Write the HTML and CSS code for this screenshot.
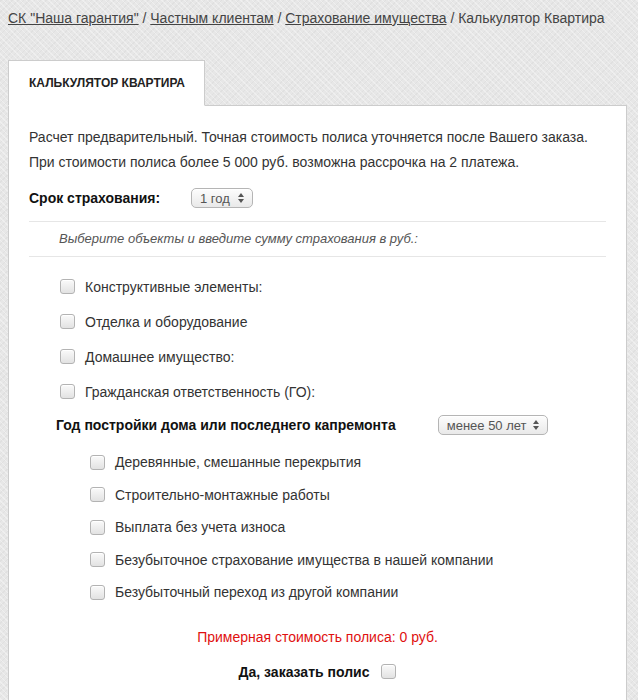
FILE: index.html
```html
<!DOCTYPE html>
<html lang="ru">
<head>
  <meta charset="UTF-8" />
  <meta name="viewport" content="width=device-width, initial-scale=1.0" />
  <title>Калькулятор Квартира</title>
  <link rel="stylesheet" href="styles.css">
</head>
<body>

  <div class="breadcrumbs">
    <a href="#">СК "Наша гарантия"</a> / <a href="#">Частным клиентам</a> / <a href="#">Страхование имущества</a> / Калькулятор Квартира
  </div>

  <div class="tabs">
    <div class="tab active">Калькулятор Квартира</div>
  </div>

  <section class="calc">
    <p class="intro">Расчет предварительный. Точная стоимость полиса уточняется после Вашего заказа.<br>
      При стоимости полиса более 5 000 руб. возможна рассрочка на 2 платежа.</p>

    <div class="term-row">
      <strong class="term-label">Срок страхования:</strong>
      <span class="select select-term">
        <span class="select-text">1 год</span>
        <svg class="select-arrows" width="6" height="10" viewBox="0 0 6 10"><path d="M3 0 L6 4 L0 4 Z M0 6 L6 6 L3 10 Z" fill="#555"/></svg>
      </span>
    </div>

    <div class="note">Выберите объекты и введите сумму страхования в руб.:</div>

    <ul class="objects">
      <li><span class="check"></span>Конструктивные элементы:</li>
      <li><span class="check"></span>Отделка и оборудование</li>
      <li><span class="check"></span>Домашнее имущество:</li>
      <li><span class="check"></span>Гражданская ответственность (ГО):</li>
    </ul>

    <div class="year-row">
      <strong>Год постройки дома или последнего капремонта</strong>
      <span class="select select-year">
        <span class="select-text">менее 50 лет</span>
        <svg class="select-arrows" width="6" height="10" viewBox="0 0 6 10"><path d="M3 0 L6 4 L0 4 Z M0 6 L6 6 L3 10 Z" fill="#555"/></svg>
      </span>
    </div>

    <ul class="options">
      <li><span class="check"></span>Деревянные, смешанные перекрытия</li>
      <li><span class="check"></span>Строительно-монтажные работы</li>
      <li><span class="check"></span>Выплата без учета износа</li>
      <li><span class="check"></span>Безубыточное страхование имущества в нашей компании</li>
      <li><span class="check"></span>Безубыточный переход из другой компании</li>
    </ul>

    <div class="total">Примерная стоимость полиса: 0 руб.</div>

    <div class="order">
      <strong>Да, заказать полис</strong>
      <span class="check"></span>
    </div>
  </section>

</body>
</html>
```

FILE: styles.css
```css
* {
  box-sizing: border-box;
}

body {
  margin: 8px;
  font-family: "Liberation Sans", Arial, sans-serif;
  font-size: 14px;
  color: #333;
  background-color: #e7e7e7;
  background-image:
    repeating-linear-gradient(45deg, rgba(255, 255, 255, 0.35) 0 1px, transparent 1px 4px),
    repeating-linear-gradient(-45deg, rgba(0, 0, 0, 0.03) 0 1px, transparent 1px 4px);
}

.breadcrumbs {
  line-height: 20px;
  color: #444;
}

.breadcrumbs a {
  color: #444;
  text-decoration: underline;
}

.tabs {
  margin-top: 32px;
  display: flex;
}

.tab {
  width: 197px;
  height: 46px;
  line-height: 44px;
  padding: 0 20px;
  background: #fff;
  border: 1px solid #ccc;
  border-bottom-color: #fff;
  margin-bottom: -1px;
  position: relative;
  font-size: 12px;
  font-weight: bold;
  text-transform: uppercase;
  white-space: nowrap;
  color: #222;
}

.calc {
  width: 619px;
  min-height: 620px;
  background: #fff;
  border: 1px solid #ccc;
  padding: 19px 20px 20px;
}

.intro {
  margin: 0;
  line-height: 25px;
}

.term-row {
  display: flex;
  align-items: center;
  margin-top: 10px;
  height: 26px;
  color: #111;
}

.term-label {
  width: 162px;
}

.select {
  display: inline-flex;
  align-items: center;
  justify-content: space-between;
  height: 20px;
  padding: 0 8px 0 8px;
  border: 1px solid #b5b5b5;
  border-radius: 5px;
  background: linear-gradient(#fdfdfd, #e9e9e9);
  box-shadow: inset 0 1px 0 #fff;
  font-size: 13px;
  color: #555;
}

.select-term {
  width: 62px;
}

.select-year {
  width: 110px;
}

.note {
  margin-top: 10px;
  border-top: 1px solid #e6e6e6;
  border-bottom: 1px solid #e6e6e6;
  padding: 8px 0 8px 30px;
  line-height: 18px;
  font-size: 13px;
  font-style: italic;
  color: #555;
}

ul {
  list-style: none;
  margin: 0;
  padding: 0;
}

.objects {
  padding: 12px 0 0 31px;
}

.objects li,
.options li {
  display: flex;
  align-items: center;
  height: 35px;
  color: #333;
}

.options {
  margin-top: 10px;
  padding-left: 61px;
}

.options li {
  height: 32.5px;
}

.check {
  display: inline-block;
  width: 15px;
  height: 15px;
  border: 1px solid #b3b3b3;
  border-radius: 3px;
  background: linear-gradient(#fafafa, #e2e2e2);
  box-shadow: inset 0 1px 1px #fff;
  margin-right: 10px;
  flex-shrink: 0;
}

.year-row {
  display: flex;
  align-items: center;
  margin-top: 5px;
  height: 22px;
  padding-left: 27px;
  color: #111;
}

.year-row strong {
  margin-right: 42px;
}

.total {
  margin-top: 18px;
  line-height: 20px;
  text-align: center;
  color: #e01010;
}

.order {
  display: flex;
  justify-content: center;
  align-items: center;
  margin-top: 15px;
  height: 20px;
  color: #111;
}

.order strong {
  margin-right: 12px;
}

.order .check {
  margin-right: 0;
}
```
